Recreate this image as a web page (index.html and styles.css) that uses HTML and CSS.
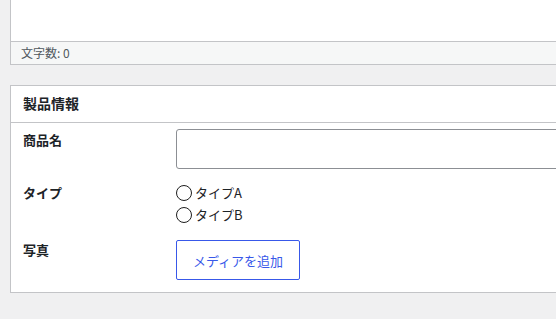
FILE: index.html
```html
<!DOCTYPE html>
<html lang="ja">
<head>
  <meta charset="UTF-8" />
  <meta name="viewport" content="width=device-width, initial-scale=1" />
  <title>製品情報</title>
  <link rel="stylesheet" href="styles.css">
</head>
<body>
  <div class="wrap">
    <div class="editor">
      <div class="editor-area"></div>
      <div class="status">文字数: 0</div>
    </div>

    <div class="panel">
      <h2 class="panel-title">製品情報</h2>
      <div class="panel-body">
        <div class="field-label">商品名</div>
        <div class="field">
          <input type="text" class="text-input" name="product_name" />
        </div>

        <div class="field-label">タイプ</div>
        <div class="field radios">
          <label class="radio"><input type="radio" name="type" value="a" /> タイプA</label>
          <label class="radio"><input type="radio" name="type" value="b" /> タイプB</label>
        </div>

        <div class="field-label">写真</div>
        <div class="field">
          <button type="button" class="media-btn">メディアを追加</button>
        </div>
      </div>
    </div>
  </div>
</body>
</html>
```

FILE: styles.css
```css
body {
  margin: 0;
  background-color: #f0f0f1;
  font-family: "Noto Sans CJK JP", "Noto Sans", sans-serif;
  font-size: 13px;
  color: #1d2327;
  overflow: hidden;
}

.wrap {
  padding-left: 10px;
  width: 640px;
}

.editor {
  border: 1px solid #c3c4c7;
  border-top: none;
  background-color: #fff;
}

.editor-area {
  height: 41px;
}

.status {
  border-top: 1px solid #c3c4c7;
  background-color: #f6f7f7;
  height: 22px;
  line-height: 22px;
  padding-left: 10px;
  font-size: 12px;
  color: #50575e;
}

.panel {
  margin-top: 20px;
  border: 1px solid #c3c4c7;
  background-color: #fff;
}

.panel-title {
  margin: 0;
  height: 36px;
  line-height: 35px;
  padding-left: 12px;
  font-size: 14px;
  font-weight: bold;
  border-bottom: 1px solid #c3c4c7;
}

.panel-body {
  display: grid;
  grid-template-columns: 153px 1fr;
  row-gap: 13px;
  padding: 6px 12px 12px 12px;
}

.field-label {
  font-weight: bold;
  line-height: 22px;
}

.text-input {
  display: block;
  box-sizing: border-box;
  width: 420px;
  height: 40px;
  margin: 0;
  border: 1px solid #8c8f94;
  border-radius: 3px;
  background: #fff;
}

.radios {
  display: flex;
  flex-direction: column;
}

.radio {
  display: flex;
  align-items: center;
  gap: 3px;
  height: 22px;
  line-height: 22px;
}

.radio input {
  appearance: none;
  -webkit-appearance: none;
  margin: 0;
  width: 16px;
  height: 16px;
  border: 1.5px solid #1e1e1e;
  border-radius: 50%;
  background: #fff;
}

.media-btn {
  display: block;
  box-sizing: border-box;
  width: 124px;
  height: 40px;
  margin-top: 1px;
  border: 1px solid #3858e9;
  border-radius: 2px;
  background: #fff;
  color: #3858e9;
  font-family: "Noto Sans CJK JP", "Noto Sans", sans-serif;
  font-size: 13px;
  padding: 0;
}
```
